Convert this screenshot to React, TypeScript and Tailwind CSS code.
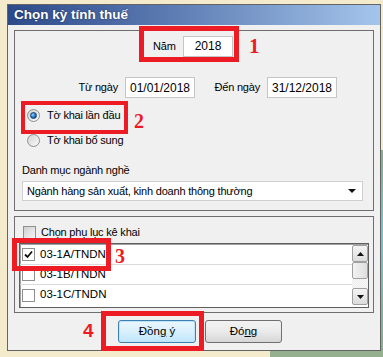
import { FC, ReactNode } from "react";

const font = { fontFamily: '"Liberation Sans", Arial, sans-serif' };

const TextBox: FC<{ value: string; className?: string }> = ({ value, className }) => (
  <div
    className={`flex h-[21px] items-center justify-center border border-[#c5c5c5] bg-white text-[12px] tracking-normal text-black ${className ?? ""}`}
  >
    {value}
  </div>
);

const Radio: FC<{ checked?: boolean }> = ({ checked }) => (
  <div className="flex h-[13px] w-[13px] items-center justify-center rounded-full border border-[#8e8f8f] bg-gradient-to-br from-[#d2d2d2] to-[#fbfbfb]">
    {checked && (
      <div className="h-[7px] w-[7px] rounded-full border border-[#0c3e6e] bg-[radial-gradient(circle_at_35%_35%,#8fd0ff,#1a6cc0_60%,#0b3f7a)]" />
    )}
  </div>
);

const Check: FC<{ checked?: boolean; grey?: boolean }> = ({ checked, grey }) => (
  <div
    className={`flex h-[13px] w-[13px] shrink-0 items-center justify-center border border-[#8e8f8f] ${
      grey ? "bg-gradient-to-br from-[#cfcfcf] to-[#f5f5f5]" : "bg-white"
    }`}
  >
    {checked && (
      <svg width="9" height="9" viewBox="0 0 9 9">
        <path d="M1 4.5 L3.5 7 L8 1.5" fill="none" stroke="#111" strokeWidth="1.8" />
      </svg>
    )}
  </div>
);

const ScrollBtn: FC<{ up?: boolean }> = ({ up }) => (
  <div className="flex h-[17px] w-[16px] items-center justify-center rounded-[2px] border border-[#a0a0a0] bg-gradient-to-b from-[#f4f4f4] to-[#dcdcdc]">
    <svg width="7" height="4" viewBox="0 0 7 4">
      <path d={up ? "M0 4 L3.5 0 L7 4 Z" : "M0 0 L7 0 L3.5 4 Z"} fill="#111" />
    </svg>
  </div>
);

const Mark: FC<{ className: string }> = ({ className }) => (
  <div className={`absolute border-[#ed1c24] ${className}`} />
);

const Num: FC<{ className: string; children: ReactNode; serif?: boolean }> = ({ className, children, serif }) => (
  <div
    className={`absolute font-bold leading-none text-[#ed1c24] ${className}`}
    style={{ fontFamily: serif ? '"Liberation Serif", serif' : '"Liberation Sans", sans-serif' }}
  >
    {children}
  </div>
);

const rows = ["03-1A/TNDN", "03-1B/TNDN", "03-1C/TNDN"];

export default function App() {
  return (
    <div className="relative h-[357px] w-[383px] overflow-hidden bg-[#f3ebcc] pl-[7px] pt-[4px]" style={font}>
      {/* background bits */}
      <div className="absolute right-0 top-[150px] h-[207px] w-[3px] bg-[linear-gradient(180deg,#8aa890,#6fc6c4_40%,#8aa890)]" />
      <div className="absolute bottom-0 left-[270px] h-[7px] w-[113px] bg-[#95b08e]" />

      <div className="relative flex h-[347px] w-[374px] flex-col border border-[#646464] bg-[#f0f0f0]">
        <div className="flex h-[20px] items-center bg-[linear-gradient(90deg,#2c4a8a,#5e7db4_45%,#a4c5eb)] pl-[6px] text-[13.5px] font-bold text-white [text-shadow:0_0_2px_#1a2a50]">
          Chọn kỳ tính thuế
        </div>

        <div className="mx-[6px] mt-[5px] flex h-[181px] flex-col border border-[#6e6e6e] text-[11px] tracking-[-0.2px] text-black">
          <div className="mt-[5px] flex h-[20px] items-center pl-[138px]">
            <span className="w-[23px]">Năm</span>
            <TextBox value="2018" className="ml-[7px] h-[20px] w-[50px]" />
          </div>

          <div className="mt-[21px] flex items-center">
            <span className="w-[103px] text-right">Từ ngày</span>
            <TextBox value="01/01/2018" className="ml-[7px] w-[70px]" />
            <span className="w-[65px] text-right">Đến ngày</span>
            <TextBox value="31/12/2018" className="ml-[7px] w-[70px]" />
          </div>

          <div className="mt-[7px] flex h-[20px] items-center pl-[12px]">
            <Radio checked />
            <span className="ml-[7px]">Tờ khai lần đầu</span>
          </div>
          <div className="mt-[5px] flex h-[20px] items-center pl-[12px]">
            <Radio />
            <span className="ml-[7px]">Tờ khai bổ sung</span>
          </div>

          <div className="mt-[12px] flex h-[16px] items-center pl-[7px]">Danh mục ngành nghề</div>

          <div className="ml-[7px] mt-[3px] flex h-[20px] w-[341px] items-center justify-between border border-[#d0d0d0] bg-white pl-[4px] pr-[6px]">
            <span>Ngành hàng sản xuất, kinh doanh thông thường</span>
            <svg width="8" height="4" viewBox="0 0 8 4">
              <path d="M0 0 L8 0 L4 4 Z" fill="#111" />
            </svg>
          </div>
        </div>

        <div className="mx-[6px] mt-[5px] flex h-[97px] flex-col border border-[#6e6e6e] text-[11px] tracking-[-0.2px] text-black">
          <div className="mt-[7px] flex h-[16px] items-center gap-[5px] pl-[8px]">
            <Check grey />
            <span>Chọn phụ lục kê khai</span>
          </div>

          <div className="ml-[4px] mt-[3px] flex h-[65px] w-[350px] border border-[#5f5f5f] bg-white shadow-[inset_1px_1px_0_#a0a0a0]">
            <div className="flex flex-1 flex-col pt-[1px] text-[11.5px] tracking-normal">
              {rows.map((r, i) => (
                <div
                  key={r}
                  className={`flex h-[20px] items-center gap-[5px] pl-[2px] ${i < 2 ? "border-b border-[#dadada]" : ""}`}
                >
                  <Check checked={i === 0} />
                  <span>{r}</span>
                </div>
              ))}
            </div>
            <div className="flex w-[16px] flex-col pt-[1px]">
              <ScrollBtn up />
              <div className="h-[17px] rounded-[2px] border border-[#a0a0a0] bg-gradient-to-r from-[#f2f2f2] to-[#dedede]" />
              <div className="h-[9px] bg-[repeating-conic-gradient(#ececec_0_25%,#fafafa_0_50%)] bg-[length:2px_2px]" />
              <ScrollBtn />
            </div>
          </div>
        </div>

        <div className="mt-[7px] flex gap-[9px] pl-[110px] text-[11.5px] text-black">
          <div className="flex h-[23px] w-[78px] items-center justify-center rounded-[3px] border border-[#3c7fb1] bg-gradient-to-b from-[#eaf6fd] via-[#d9f0fc] to-[#bee6fd] shadow-[inset_0_0_0_1px_#bfe3f7]">
            <span>
              Đồn<span className="underline">g</span> ý
            </span>
          </div>
          <div className="flex h-[23px] w-[77px] items-center justify-center rounded-[3px] border border-[#707070] bg-gradient-to-b from-[#f2f2f2] via-[#ebebeb] to-[#d6d6d6]">
            <span>
              Đó<span className="underline">n</span>g
            </span>
          </div>
        </div>
      </div>

      {/* annotations */}
      <Mark className="left-[139px] top-[26px] h-[36px] w-[100px] border-[5px]" />
      <Num serif className="left-[249px] top-[36px] text-[21px]">1</Num>
      <Mark className="left-[21px] top-[101px] h-[33px] w-[107px] border-[4px]" />
      <Num serif className="left-[134px] top-[111px] text-[20px]">2</Num>
      <Mark className="left-[12px] top-[238px] h-[33px] w-[99px] border-[5px]" />
      <Num serif className="left-[115px] top-[246px] text-[20px]">3</Num>
      <Mark className="left-[101px] top-[311px] h-[40px] w-[103px] border-[5px]" />
      <Num className="left-[83px] top-[321px] text-[19px]">4</Num>
    </div>
  );
}
